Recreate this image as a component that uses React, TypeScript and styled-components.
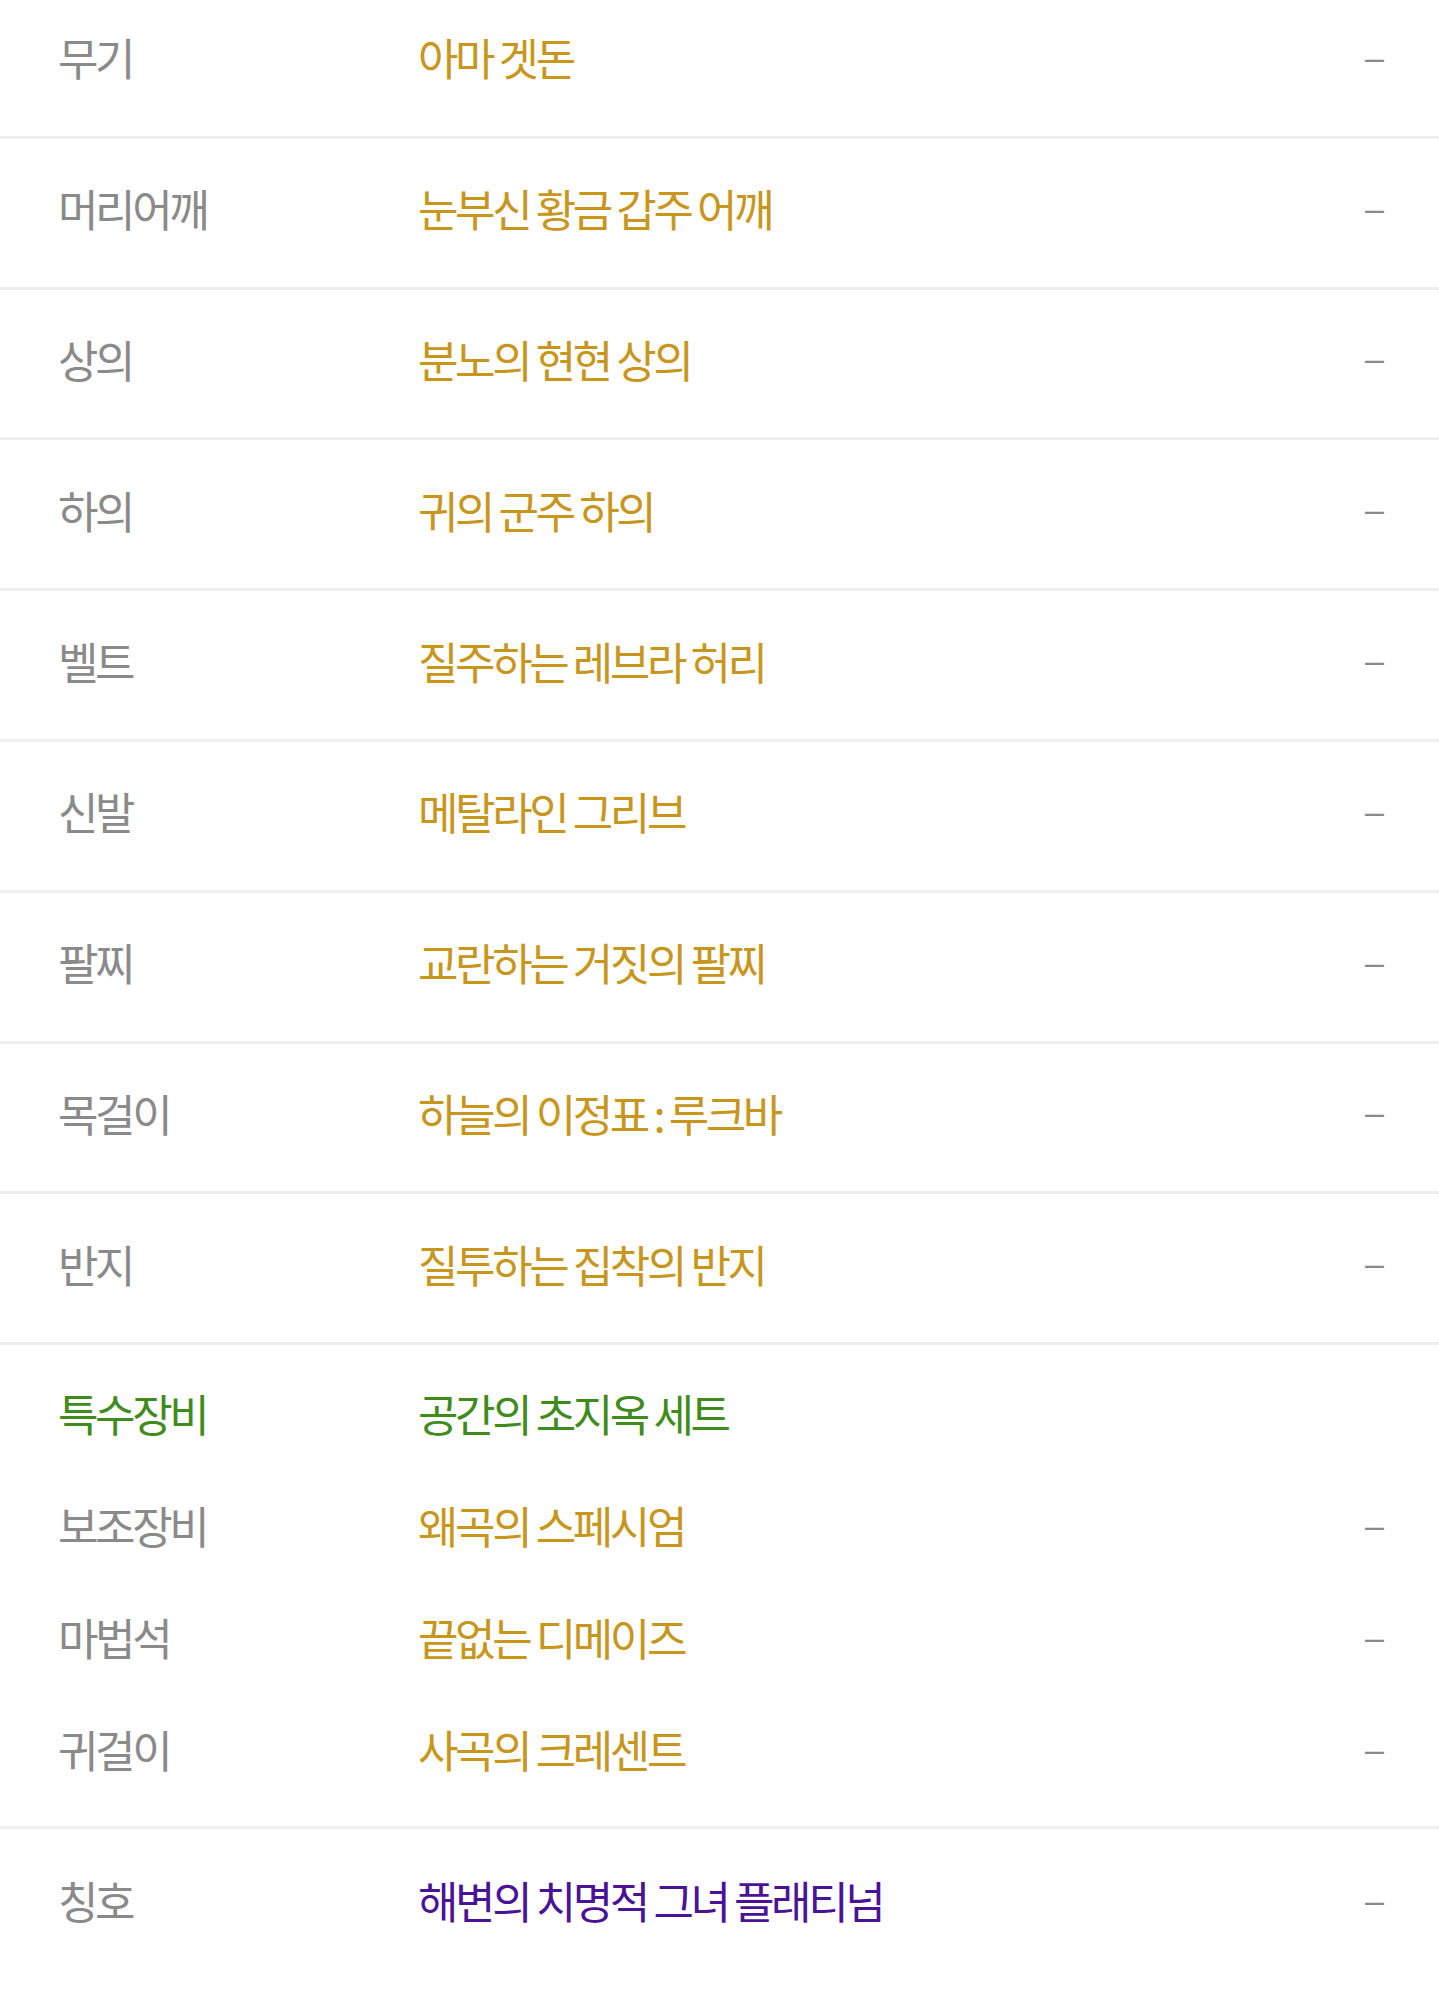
import React from 'react';
import styled, { createGlobalStyle } from 'styled-components';

type Tone = 'label' | 'unique' | 'set' | 'title';

interface Slot {
  part: string;
  item: string;
  tone: Tone;
  partTone?: Tone;
  empty?: boolean;
}

const colors: Record<Tone, string> = {
  label: '#8a8a8a',
  unique: '#c8961c',
  set: '#3f8c1c',
  title: '#4a1396',
};

const mainSlots: Slot[] = [
  { part: '무기', item: '아마 겟돈', tone: 'unique' },
  { part: '머리어깨', item: '눈부신 황금 갑주 어깨', tone: 'unique' },
  { part: '상의', item: '분노의 현현 상의', tone: 'unique' },
  { part: '하의', item: '귀의 군주 하의', tone: 'unique' },
  { part: '벨트', item: '질주하는 레브라 허리', tone: 'unique' },
  { part: '신발', item: '메탈라인 그리브', tone: 'unique' },
  { part: '팔찌', item: '교란하는 거짓의 팔찌', tone: 'unique' },
  { part: '목걸이', item: '하늘의 이정표 : 루크바', tone: 'unique' },
  { part: '반지', item: '질투하는 집착의 반지', tone: 'unique' },
];

const specialSlots: Slot[] = [
  { part: '특수장비', item: '공간의 초지옥 세트', tone: 'set', partTone: 'set', empty: true },
  { part: '보조장비', item: '왜곡의 스페시엄', tone: 'unique' },
  { part: '마법석', item: '끝없는 디메이즈', tone: 'unique' },
  { part: '귀걸이', item: '사곡의 크레센트', tone: 'unique' },
];

const titleSlot: Slot = { part: '칭호', item: '해변의 치명적 그녀 플래티넘', tone: 'title' };

const GlobalStyle = createGlobalStyle`
  * {
    box-sizing: border-box;
  }
  body {
    margin: 0;
    background: #ffffff;
    font-family: "Noto Sans CJK KR", "Noto Sans", sans-serif;
  }
`;

const List = styled.div`
  margin-top: -12px;
`;

const Section = styled.div<{ $pad?: boolean }>`
  border-bottom: 3px solid #eeeeee;
  padding: ${(p) => (p.$pad ? '12px 0 21px' : '0')};
`;

const Row = styled.div<{ $h: number; $lift?: number }>`
  display: flex;
  align-items: center;
  height: ${(p) => p.$h}px;
  padding: 0 55px ${(p) => p.$lift ?? 0}px 58px;
`;

const Part = styled.span<{ $tone: Tone }>`
  width: 360px;
  flex-shrink: 0;
  font-size: 44px;
  letter-spacing: -3.4px;
  color: ${(p) => colors[p.$tone]};
`;

const Item = styled.span<{ $tone: Tone }>`
  flex: 1;
  font-size: 44px;
  letter-spacing: -3.4px;
  color: ${(p) => colors[p.$tone]};
`;

const Dash = styled.span`
  font-family: "Liberation Sans", sans-serif;
  font-size: 34px;
  color: #8a8a8a;
`;

const SlotRow: React.FC<{ slot: Slot; h: number; lift?: number }> = ({ slot, h, lift }) => (
  <Row $h={h} $lift={lift}>
    <Part $tone={slot.partTone ?? 'label'}>{slot.part}</Part>
    <Item $tone={slot.tone}>{slot.item}</Item>
    {!slot.empty && <Dash>–</Dash>}
  </Row>
);

export default function App() {
  return (
    <>
      <GlobalStyle />
      <List>
        {mainSlots.map((s) => (
          <Section key={s.part}>
            <SlotRow slot={s} h={147.8} lift={9} />
          </Section>
        ))}
        <Section $pad>
          {specialSlots.map((s) => (
            <SlotRow key={s.part} slot={s} h={112} />
          ))}
        </Section>
        <SlotRow slot={titleSlot} h={142} />
      </List>
    </>
  );
}
